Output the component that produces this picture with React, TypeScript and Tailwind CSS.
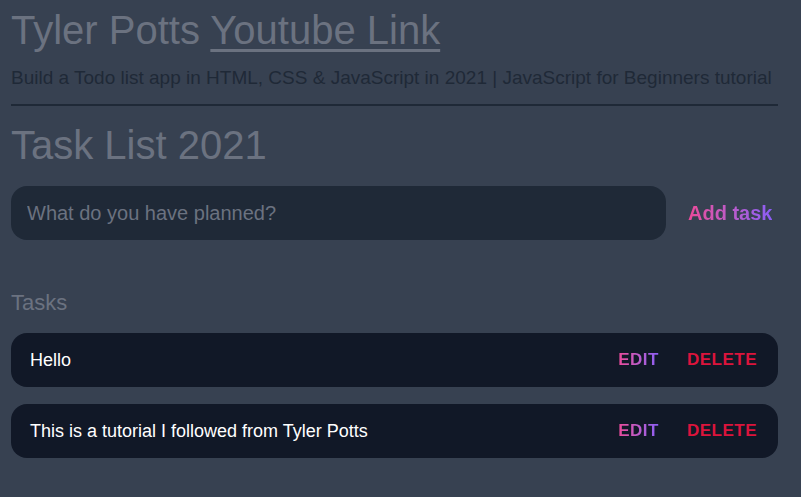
import { useState } from "react"

interface Task {
    id: number
    text: string
}

const INITIAL: Task[] = [
    { id: 1, text: "Hello" },
    { id: 2, text: "This is a tutorial I followed from Tyler Potts" },
]

export default function App() {
    const [tasks, setTasks] = useState<Task[]>(INITIAL)
    const [value, setValue] = useState("")

    const addTask = (e: React.FormEvent) => {
        e.preventDefault()
        if (!value.trim()) return
        setTasks((prev) => [...prev, { id: Date.now(), text: value }])
        setValue("")
    }

    return (
        <div className="min-h-[497px] bg-[#374151] font-['Liberation_Sans',Arial,sans-serif]">
            <div className="w-[767px] ml-[11px]">
                <header className="pt-[4px]">
                    <h1 className="text-[40px] leading-[52px] text-[#6b7280]">
                        Tyler Potts{" "}
                        <a href="#" className="underline decoration-[3px] underline-offset-[5px]">
                            Youtube Link
                        </a>
                    </h1>
                    <p className="mt-[10px] text-[19px] leading-[24px] text-[#1f2937]">
                        Build a Todo list app in HTML, CSS &amp; JavaScript in 2021 | JavaScript for Beginners tutorial
                    </p>
                    <hr className="mt-[14px] border-0 h-[2px] bg-[#1f2937]" />
                </header>

                <h2 className="mt-[16px] text-[40px] leading-[46px] text-[#6b7280]">Task List 2021</h2>

                <form onSubmit={addTask} className="mt-[18px] flex items-center">
                    <input
                        value={value}
                        onChange={(e) => setValue(e.target.value)}
                        placeholder="What do you have planned?"
                        className="w-[655px] h-[54px] px-[16px] rounded-[16px] bg-[#1f2937] text-[20px] text-gray-300 placeholder:text-[#6b7280] outline-none"
                    />
                    <button
                        type="submit"
                        className="ml-[22px] text-[20px] font-bold bg-gradient-to-r from-[#ec4899] to-[#8b5cf6] bg-clip-text text-transparent"
                    >
                        Add task
                    </button>
                </form>

                <section className="mt-[49px]">
                    <h2 className="text-[22px] leading-[28px] text-[#6b7280]">Tasks</h2>
                    <div className="mt-[16px] flex flex-col gap-[17px]">
                        {tasks.map((task) => (
                            <div
                                key={task.id}
                                className="h-[54px] flex items-center justify-between pl-[19px] pr-[21px] rounded-[16px] bg-[#111827]"
                            >
                                <span className="text-[18px] text-white">{task.text}</span>
                                <div className="flex items-center gap-[28px]">
                                    <button className="text-[17px] font-bold uppercase tracking-[0.5px] bg-gradient-to-r from-[#ec4899] to-[#8b5cf6] bg-clip-text text-transparent">
                                        Edit
                                    </button>
                                    <button
                                        onClick={() => setTasks((prev) => prev.filter((t) => t.id !== task.id))}
                                        className="text-[17px] font-bold uppercase tracking-[0.5px] text-[#dc143c]"
                                    >
                                        Delete
                                    </button>
                                </div>
                            </div>
                        ))}
                    </div>
                </section>
            </div>
        </div>
    )
}
